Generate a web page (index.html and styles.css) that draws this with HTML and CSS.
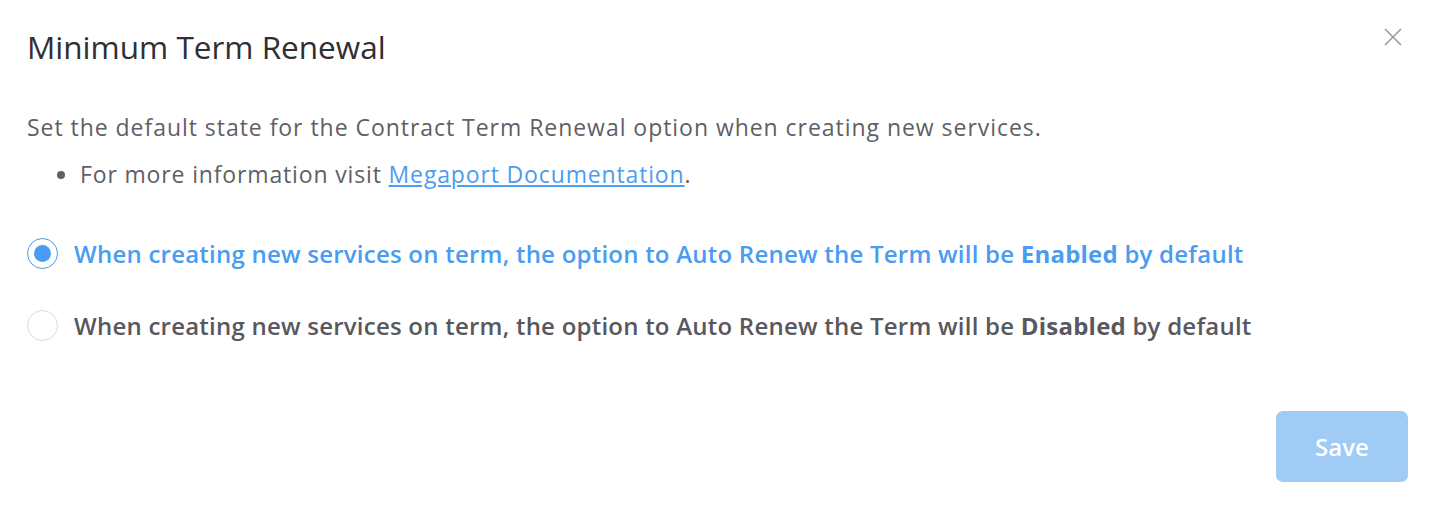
FILE: index.html
```html
<!DOCTYPE html>
<html>
  <head>
    <meta charset="utf-8" />
    <title>Minimum Term Renewal</title>
    <link rel="stylesheet" href="styles.css">
  </head>

  <body>
    <div class="dialog">
      <div class="dialog_header">
        <h2 class="dialog_title">Minimum Term Renewal</h2>
        <button class="btn_close" aria-label="Close">
          <svg width="18" height="18" viewBox="0 0 18 18">
            <path d="M1 1 L17 17 M17 1 L1 17" stroke="#9a9a9a" stroke-width="1.6" fill="none" />
          </svg>
        </button>
      </div>

      <div class="dialog_body">
        <p class="intro">
          Set the default state for the Contract Term Renewal option when creating new services.
        </p>
        <ul class="info_list">
          <li>For more information visit <a href="#">Megaport Documentation</a>.</li>
        </ul>

        <div class="radio_group">
          <label class="radio_row is_checked">
            <input type="radio" name="renew" value="enabled" checked />
            <span class="radio_mark"></span>
            <span class="radio_text">When creating new services on term, the option to Auto Renew the Term will be <b>Enabled</b> by default</span>
          </label>
          <label class="radio_row">
            <input type="radio" name="renew" value="disabled" />
            <span class="radio_mark"></span>
            <span class="radio_text">When creating new services on term, the option to Auto Renew the Term will be <b>Disabled</b> by default</span>
          </label>
        </div>
      </div>

      <div class="dialog_footer">
        <button class="btn_save" disabled>Save</button>
      </div>
    </div>
  </body>
</html>
```

FILE: styles.css
```css
html,
body {
  margin: 0;
  padding: 0;
  background: #fff;
}
.dialog,
.dialog * {
  box-sizing: border-box;
  font-family: "Open Sans", "Liberation Sans", sans-serif;
}
.dialog {
  width: 1436px;
  height: 510px;
  padding: 0 28px 0 27px;
}
.dialog_header {
  display: flex;
  justify-content: space-between;
  align-items: flex-start;
  padding-top: 30px;
}
.dialog_title {
  margin: 0;
  font-size: 31.5px;
  line-height: 34px;
  font-weight: 400;
  color: #2f2f33;
}
.btn_close {
  margin: -2px 6px 0 0;
  padding: 0;
  width: 18px;
  height: 18px;
  border: 0;
  background: none;
  cursor: pointer;
}
.btn_close svg {
  display: block;
}
.intro {
  margin: 49px 0 0;
  font-size: 23px;
  line-height: 28px;
  letter-spacing: 0.96px;
  color: #5f5f66;
}
.info_list {
  margin: 19px 0 0;
  padding-left: 53px;
  font-size: 23px;
  line-height: 28px;
  letter-spacing: 0.85px;
  color: #5f5f66;
}
.info_list a {
  color: #4a9df0;
  text-decoration: underline;
}
.radio_group {
  display: flex;
  flex-direction: column;
  gap: 42px;
  margin-top: 50px;
}
.radio_row {
  display: flex;
  align-items: center;
  gap: 16px;
  height: 30px;
  cursor: pointer;
  font-size: 24px;
  font-weight: 600;
  letter-spacing: 0.23px;
  color: #58585e;
}
.radio_row input {
  display: none;
}
.radio_row b {
  font-weight: 700;
}
.radio_mark {
  flex: none;
  position: relative;
  width: 31px;
  height: 31px;
  border: 1px solid #dcdce0;
  border-radius: 50%;
  background: #fff;
}
.radio_row.is_checked {
  color: #4a9cf0;
}
.radio_row.is_checked .radio_mark {
  border-color: #4a9cf0;
}
.radio_row.is_checked .radio_mark::after {
  content: "";
  position: absolute;
  top: 6px;
  left: 6px;
  width: 17px;
  height: 17px;
  border-radius: 50%;
  background: #4a9cf0;
}
.dialog_footer {
  display: flex;
  justify-content: flex-end;
  margin-top: 71px;
}
.btn_save {
  width: 132px;
  height: 71px;
  border: 0;
  border-radius: 7px;
  background: #9fcbf5;
  color: #fff;
  font-size: 24px;
  font-weight: 600;
}
```
